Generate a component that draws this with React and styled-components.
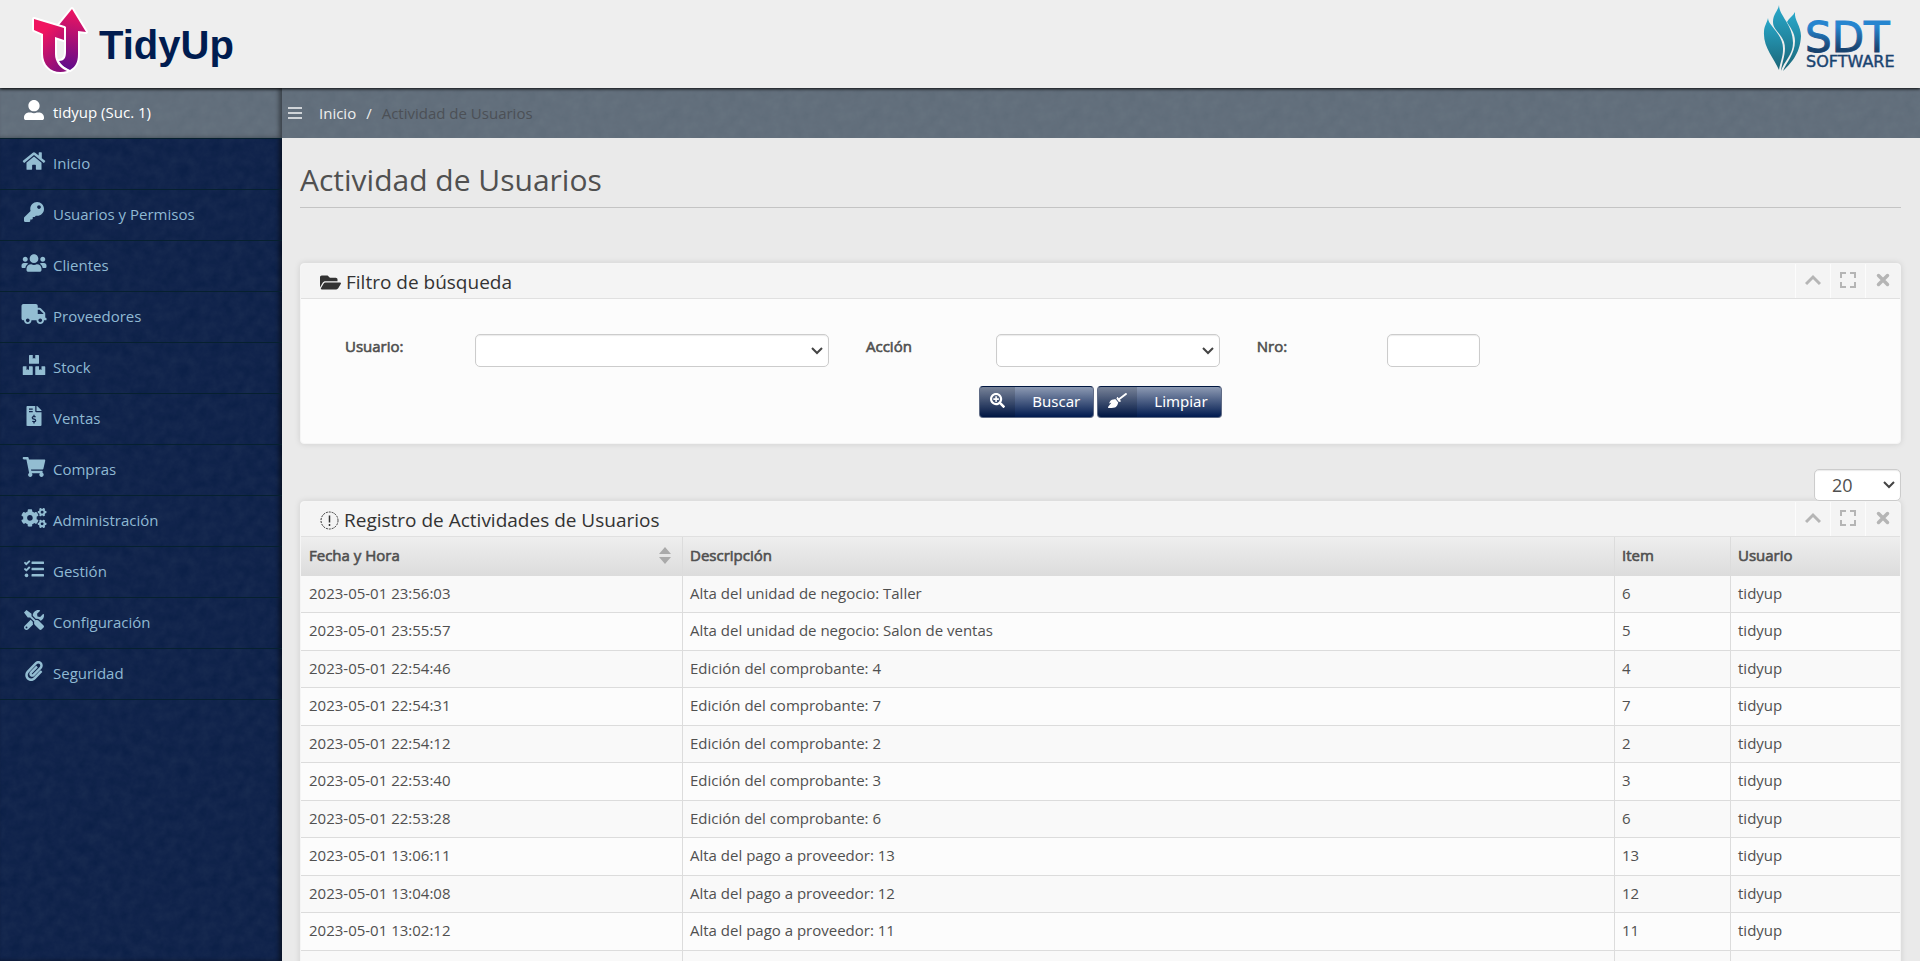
import React from "react";
import styled, { createGlobalStyle } from "styled-components";
import {
  FaUserAlt, FaHome, FaKey, FaUsers, FaTruck, FaBoxes, FaFileInvoiceDollar, FaShoppingCart,
  FaCogs, FaTasks, FaTools, FaPaperclip, FaFolderOpen, FaSearchPlus, FaBroom,
} from "react-icons/fa";

const svgUrl = (markup) => `url("data:image/svg+xml,${encodeURIComponent(markup)}")`;

const grain = svgUrl(
  `<svg xmlns='http://www.w3.org/2000/svg' width='200' height='200'><filter id='n' x='0' y='0' width='100%' height='100%'><feTurbulence type='fractalNoise' baseFrequency='0.09' numOctaves='5' stitchTiles='stitch'/><feColorMatrix values='0 0 0 0 1 0 0 0 0 1 0 0 0 0 1 0.06 0 0 0 -0.01'/></filter><rect width='200' height='200' filter='url(#n)'/></svg>`
);
const arrow = svgUrl(
  `<svg xmlns='http://www.w3.org/2000/svg' width='12' height='8' fill='none' stroke='#444' stroke-width='2'><path d='M1 1L6 6L11 1'/></svg>`
);

const GlobalStyle = createGlobalStyle`
  * { box-sizing: border-box; }
  body {
    margin: 0;
    background: #eaeaea;
    color: #505050;
    font: 15px/21px "Open Sans", "Noto Sans", sans-serif;
  }
  h1, h2, ul, ol { margin: 0; padding: 0; font-weight: 400; list-style: none; }
  button, select, input { font: inherit; color: inherit; }
  a { color: inherit; text-decoration: none; }
`;

const Shell = styled.div`
  display: flex;
  flex-direction: column;
  height: 100vh;
  overflow: hidden;
`;
const TopBar = styled.header`
  position: relative;
  z-index: 2;
  flex: none;
  display: flex;
  justify-content: space-between;
  height: 88px;
  padding: 0 20px 0 32px;
  background: #eee;
  box-shadow: 0 1px 3px rgba(0, 0, 0, 0.9);
`;
const Logo = styled.svg`
  display: block;
  height: 80px;
  width: ${(p) => p.$width}px;
`;
const Body = styled.div`
  flex: 1;
  display: flex;
  min-height: 0;
`;
const Sidebar = styled.nav`
  flex: none;
  width: 282px;
  background: ${grain} #0c2048;
  box-shadow: inset -3px 0 4px rgba(0, 0, 0, 0.5);
`;
const NavLink = styled.a`
  display: flex;
  height: 51px;
  padding: 12px 0 0 20px;
  border-bottom: 1px solid #06202f;
  color: ${(p) => (p.$current ? "#fff" : "#8fb9d3")};
  background: ${(p) => (p.$current ? `${grain} #5f6c79` : "transparent")};
  box-shadow: ${(p) => (p.$current ? "inset -3px 0 4px rgba(0, 0, 0, 0.4)" : "none")};
  svg { flex: none; width: 28px; height: 20px; color: ${(p) => (p.$current ? "#fff" : "#93bdd2")}; }
  span { padding: 2px 0 0 5px; }
`;
const Main = styled.main`
  flex: 1;
  min-width: 0;
`;
const Crumbs = styled.ol`
  display: flex;
  align-items: center;
  height: 50px;
  padding: 0 6px;
  background: ${grain} #5f6c79;
  color: #eee;
`;
const MenuButton = styled.button`
  display: flex;
  width: 14px;
  height: 14px;
  margin-right: 17px;
  padding: 0;
  border: 0;
  background: none;
  color: #d0d4d8;
`;
const Crumb = styled.li`
  color: #eee;
`;
const CurrentCrumb = styled.li`
  color: #4c5056;
  &::before { content: "/"; color: #eee; padding: 0 10px; }
`;
const Content = styled.div`
  padding: 0 19px 0 18px;
`;
const Title = styled.h1`
  height: 70px;
  padding-top: 20px;
  border-bottom: 1px solid #c4c4c4;
  font-size: 30px;
  line-height: 44px;
`;
const Panel = styled.section`
  margin-top: ${(p) => p.$top}px;
  border: 1px solid #f5f5f5;
  border-radius: 4px;
  background: #fcfcfc;
  box-shadow: 0 0 6px rgba(0, 0, 0, 0.12);
`;
const PanelHead = styled.div`
  display: flex;
  justify-content: space-between;
  height: 35px;
  border-bottom: 1px solid #e0e0e0;
  border-radius: 4px 4px 0 0;
  background: #f4f4f4;
`;
const PanelTitle = styled.h2`
  display: flex;
  align-items: center;
  gap: 5px;
  padding: 2px 0 0 19px;
  color: #333;
  font-size: 19px;
  line-height: 28px;
`;
const Tools = styled.div`
  display: flex;
`;
const Tool = styled.button`
  width: 35px;
  padding: 0 0 2px;
  border: 0;
  border-left: 1px solid #fcfcfc;
  background: none;
  color: #b5b5b5;
  svg { display: block; margin: auto; }
`;
const Filters = styled.form`
  padding: 35px 0 25px 44px;
`;
const Fields = styled.div`
  display: grid;
  grid-template-columns: 483fr 353fr 223fr 382fr;
  column-gap: 37px;
`;
const Field = styled.div`
  display: flex;
  min-width: 0;
`;
const emphasis = `
  font-weight: 400;
  -webkit-text-stroke: 0.04em currentColor;
`;
const Label = styled.label`
  ${emphasis}
  flex: none;
  width: 130px;
  padding-top: 2px;
`;
const box = `
  flex: 1;
  width: 100%;
  min-width: 0;
  height: 33px;
  border: 1px solid #ccc;
  border-radius: 5px;
  background-color: #fff;
  box-shadow: inset 0 1px 1px rgba(0, 0, 0, 0.08);
`;
const Input = styled.input`${box}`;
const Select = styled.select`
  ${box}
  appearance: none;
  background-image: ${arrow};
  background-repeat: no-repeat;
  background-position: right 5px center;
`;
const PageSize = styled(Select)`
  flex: none;
  width: 87px;
  height: 32px;
  padding: 1px 17px 0;
  font-size: 18px;
`;
const Actions = styled.div`
  display: flex;
  justify-content: center;
  gap: 3px;
  margin: 19px 44px 0 0;
`;
const Action = styled.button`
  display: flex;
  height: 32px;
  padding: 0 13px 0 0;
  overflow: hidden;
  border: 1px solid #5f6b85;
  border-top-color: #00163f;
  border-radius: 4px;
  background: linear-gradient(#8d9ab3, #001a4f);
  color: #fff;
  font: 15px/28px "Noto Sans", sans-serif;
`;
const ActionIcon = styled.span`
  display: flex;
  align-items: center;
  height: 30px;
  margin-right: 17px;
  padding: 0 10px 3px;
  background: rgba(0, 0, 0, 0.15);
`;
const Paging = styled.div`
  display: flex;
  justify-content: flex-end;
  margin-top: 25px;
`;
const Table = styled.table`
  width: 100%;
  border-collapse: separate;
  border-spacing: 0;
  table-layout: fixed;
  th, td { padding: 6px 7px 8px; text-align: left; border-left: 1px solid #dcdcdc; }
  th:first-child, td:first-child { padding-left: 8px; border-left: 0; }
  th { ${emphasis} height: 39px; background: linear-gradient(#eee, #dcdcdc); }
  td { height: 37px; border-bottom: 1px solid #dcdcdc; }
  tbody tr { background: #f9f9f9; }
  tbody tr:nth-child(even) { background: #fcfcfc; }
  tbody tr:nth-child(even) td { height: 38px; }
`;
const Col = styled.col`
  width: ${(p) => (p.$width ? `${p.$width}px` : "auto")};
`;
const Sortable = styled.div`
  display: flex;
  justify-content: space-between;
  align-items: center;
  padding-right: 4px;
`;

const nav = [
  [FaHome, "Inicio"], [FaKey, "Usuarios y Permisos"], [FaUsers, "Clientes"], [FaTruck, "Proveedores"],
  [FaBoxes, "Stock"], [FaFileInvoiceDollar, "Ventas"], [FaShoppingCart, "Compras"], [FaCogs, "Administración"],
  [FaTasks, "Gestión"], [FaTools, "Configuración"], [FaPaperclip, "Seguridad"],
];
const rows = [
  ["2023-05-01 23:56:03", "Alta del unidad de negocio: Taller", "6", "tidyup"],
  ["2023-05-01 23:55:57", "Alta del unidad de negocio: Salon de ventas", "5", "tidyup"],
  ["2023-05-01 22:54:46", "Edición del comprobante: 4", "4", "tidyup"],
  ["2023-05-01 22:54:31", "Edición del comprobante: 7", "7", "tidyup"],
  ["2023-05-01 22:54:12", "Edición del comprobante: 2", "2", "tidyup"],
  ["2023-05-01 22:53:40", "Edición del comprobante: 3", "3", "tidyup"],
  ["2023-05-01 22:53:28", "Edición del comprobante: 6", "6", "tidyup"],
  ["2023-05-01 13:06:11", "Alta del pago a proveedor: 13", "13", "tidyup"],
  ["2023-05-01 13:04:08", "Alta del pago a proveedor: 12", "12", "tidyup"],
  ["2023-05-01 13:02:12", "Alta del pago a proveedor: 11", "11", "tidyup"],
  ["", "", "", ""],
];

function TidyUpLogo() {
  return (
    <Logo $width={210} viewBox="0 0 210 80" role="img" aria-label="TidyUp">
      <defs>
        <linearGradient id="pink" x1="0" y1="0" x2="0.6" y2="1">
          <stop offset="0.3" stopColor="#f01560" />
          <stop offset="1" stopColor="#8c0f7c" />
        </linearGradient>
        <linearGradient id="purple" x1="0.5" y1="0" x2="0.4" y2="1">
          <stop offset="0" stopColor="#f01560" />
          <stop offset="1" stopColor="#5f0c8c" />
        </linearGradient>
      </defs>
      <g stroke="#fff" strokeWidth="4" strokeLinejoin="round" paintOrder="stroke">
        <path d="M40 9 L54 32 L46 31 V54 C46 63 43 67 38 70 C33 68 29 65 27 61 C32 61 34 58 34 52 V27 L27 25 Z" fill="url(#purple)" />
        <path d="M2 19 L32 28 V40 L23 37 V54 C23 62 28 68 35 71 C22 75 11 67 11 54 V34 L2 30 Z" fill="url(#pink)" />
      </g>
      <text x="67" y="59" fill="#001c50" fontFamily="Liberation Sans, sans-serif" fontWeight="700" fontSize="40">TidyUp</text>
    </Logo>
  );
}

function SdtLogo() {
  return (
    <Logo $width={140} viewBox="0 0 140 80" role="img" aria-label="SDT Software">
      <defs>
        <linearGradient id="teal" x1="0" y1="0" x2="0" y2="1">
          <stop offset="0" stopColor="#29a9cb" />
          <stop offset="1" stopColor="#1a6577" />
        </linearGradient>
        <linearGradient id="blue" gradientUnits="userSpaceOnUse" x1="0" y1="24" x2="0" y2="52">
          <stop offset="0.1" stopColor="#2685cf" />
          <stop offset="0.9" stopColor="#18436f" />
        </linearGradient>
      </defs>
      <g fill="url(#teal)">
        <path d="M8 18 C8 26 24 34 23 50 C23 57 20 63 19 70 C14 58 3 47 4 32 C4 26 7 23 8 18 Z" />
        <path d="M19 5 C19 16 33 24 33 43 C33 55 24 61 21 71 C22 61 27 52 24 42 C21 33 13 30 13 22 C13 14 18 11 19 5 Z" />
        <path d="M35 12 C34 20 41 26 41 36 C40 55 30 64 23 71 C26 63 35 54 35 41 C35 33 30 27 27 22 C29 18 33 16 35 12 Z" />
      </g>
      <text fill="url(#blue)" stroke="url(#blue)" fontFamily="DejaVu Sans, sans-serif">
        <tspan x="45" y="52" fontSize="42" strokeWidth="1">SDT</tspan>
        <tspan x="46" y="67" fontSize="16" strokeWidth="0.4">SOFTWARE</tspan>
      </text>
    </Logo>
  );
}

function PanelTools() {
  return (
    <Tools>
      <Tool type="button" aria-label="Contraer">
        <svg width="16" height="16" viewBox="0 0 16 16" fill="none" stroke="currentColor" strokeWidth="3"><path d="M1 12 L8 5 L15 12" /></svg>
      </Tool>
      <Tool type="button" aria-label="Pantalla completa">
        <svg width="16" height="16" viewBox="0 0 16 16" fill="none" stroke="currentColor" strokeWidth="2"><path d="M1 6V1H6M10 1H15V6M15 10V15H10M6 15H1V10" /></svg>
      </Tool>
      <Tool type="button" aria-label="Cerrar">
        <svg width="16" height="16" viewBox="0 0 16 16" fill="none" stroke="currentColor" strokeWidth="3.500" strokeLinecap="round"><path d="M3.500 3.500L12.500 12.500M12.500 3.500L3.500 12.500" /></svg>
      </Tool>
    </Tools>
  );
}

export default function App() {
  return (
    <Shell>
      <GlobalStyle />
      <TopBar>
        <TidyUpLogo />
        <SdtLogo />
      </TopBar>
      <Body>
        <Sidebar>
          <NavLink href="#perfil" $current><FaUserAlt /><span>tidyup (Suc. 1)</span></NavLink>
          {nav.map(([Icon, label]) => (
            <NavLink key={label} href="#"><Icon /><span>{label}</span></NavLink>
          ))}
        </Sidebar>
        <Main>
          <Crumbs>
            <li>
              <MenuButton type="button" aria-label="Menú">
                <svg width="14" height="14" viewBox="0 0 14 14" stroke="currentColor" strokeWidth="2"><path d="M0 2H14M0 7H14M0 12H14" /></svg>
              </MenuButton>
            </li>
            <Crumb><a href="#">Inicio</a></Crumb>
            <CurrentCrumb>Actividad de Usuarios</CurrentCrumb>
          </Crumbs>
          <Content>
            <Title>Actividad de Usuarios</Title>
            <Panel $top={55}>
              <PanelHead>
                <PanelTitle><FaFolderOpen size={21} />Filtro de búsqueda</PanelTitle>
                <PanelTools />
              </PanelHead>
              <Filters>
                <Fields>
                  <Field><Label htmlFor="usuario">Usuario:</Label><Select id="usuario"><option></option></Select></Field>
                  <Field><Label htmlFor="accion">Acción</Label><Select id="accion"><option></option></Select></Field>
                  <Field><Label htmlFor="nro">Nro:</Label><Input id="nro" type="text" /></Field>
                </Fields>
                <Actions>
                  <Action type="button"><ActionIcon><FaSearchPlus size={15} /></ActionIcon>Buscar</Action>
                  <Action type="button"><ActionIcon><FaBroom size={19} /></ActionIcon>Limpiar</Action>
                </Actions>
              </Filters>
            </Panel>
            <Paging>
              <PageSize aria-label="Registros por página"><option>20</option></PageSize>
            </Paging>
            <Panel $top={0}>
              <PanelHead>
                <PanelTitle>
                  <svg width="19" height="19" viewBox="0 0 19 19" fill="none" stroke="#333"><circle cx="9.500" cy="9.500" r="8.500" strokeDasharray="2 1" /><path d="M9.500 4.500V11.500M9.500 13V15" strokeWidth="1.500" /></svg>
                  Registro de Actividades de Usuarios
                </PanelTitle>
                <PanelTools />
              </PanelHead>
              <Table>
                <colgroup><Col $width={381} /><Col /><Col $width={116} /><Col $width={170} /></colgroup>
                <thead>
                  <tr>
                    <th scope="col">
                      <Sortable>
                        Fecha y Hora
                        <svg width="12" height="17" viewBox="0 0 12 17" fill="#aaa"><path d="M0 7L6 0L12 7ZM0 10H12L6 17Z" /></svg>
                      </Sortable>
                    </th>
                    <th scope="col">Descripción</th>
                    <th scope="col">Item</th>
                    <th scope="col">Usuario</th>
                  </tr>
                </thead>
                <tbody>
                  {rows.map((cells, i) => (
                    <tr key={i}>{cells.map((cell, j) => <td key={j}>{cell}</td>)}</tr>
                  ))}
                </tbody>
              </Table>
            </Panel>
          </Content>
        </Main>
      </Body>
    </Shell>
  );
}
